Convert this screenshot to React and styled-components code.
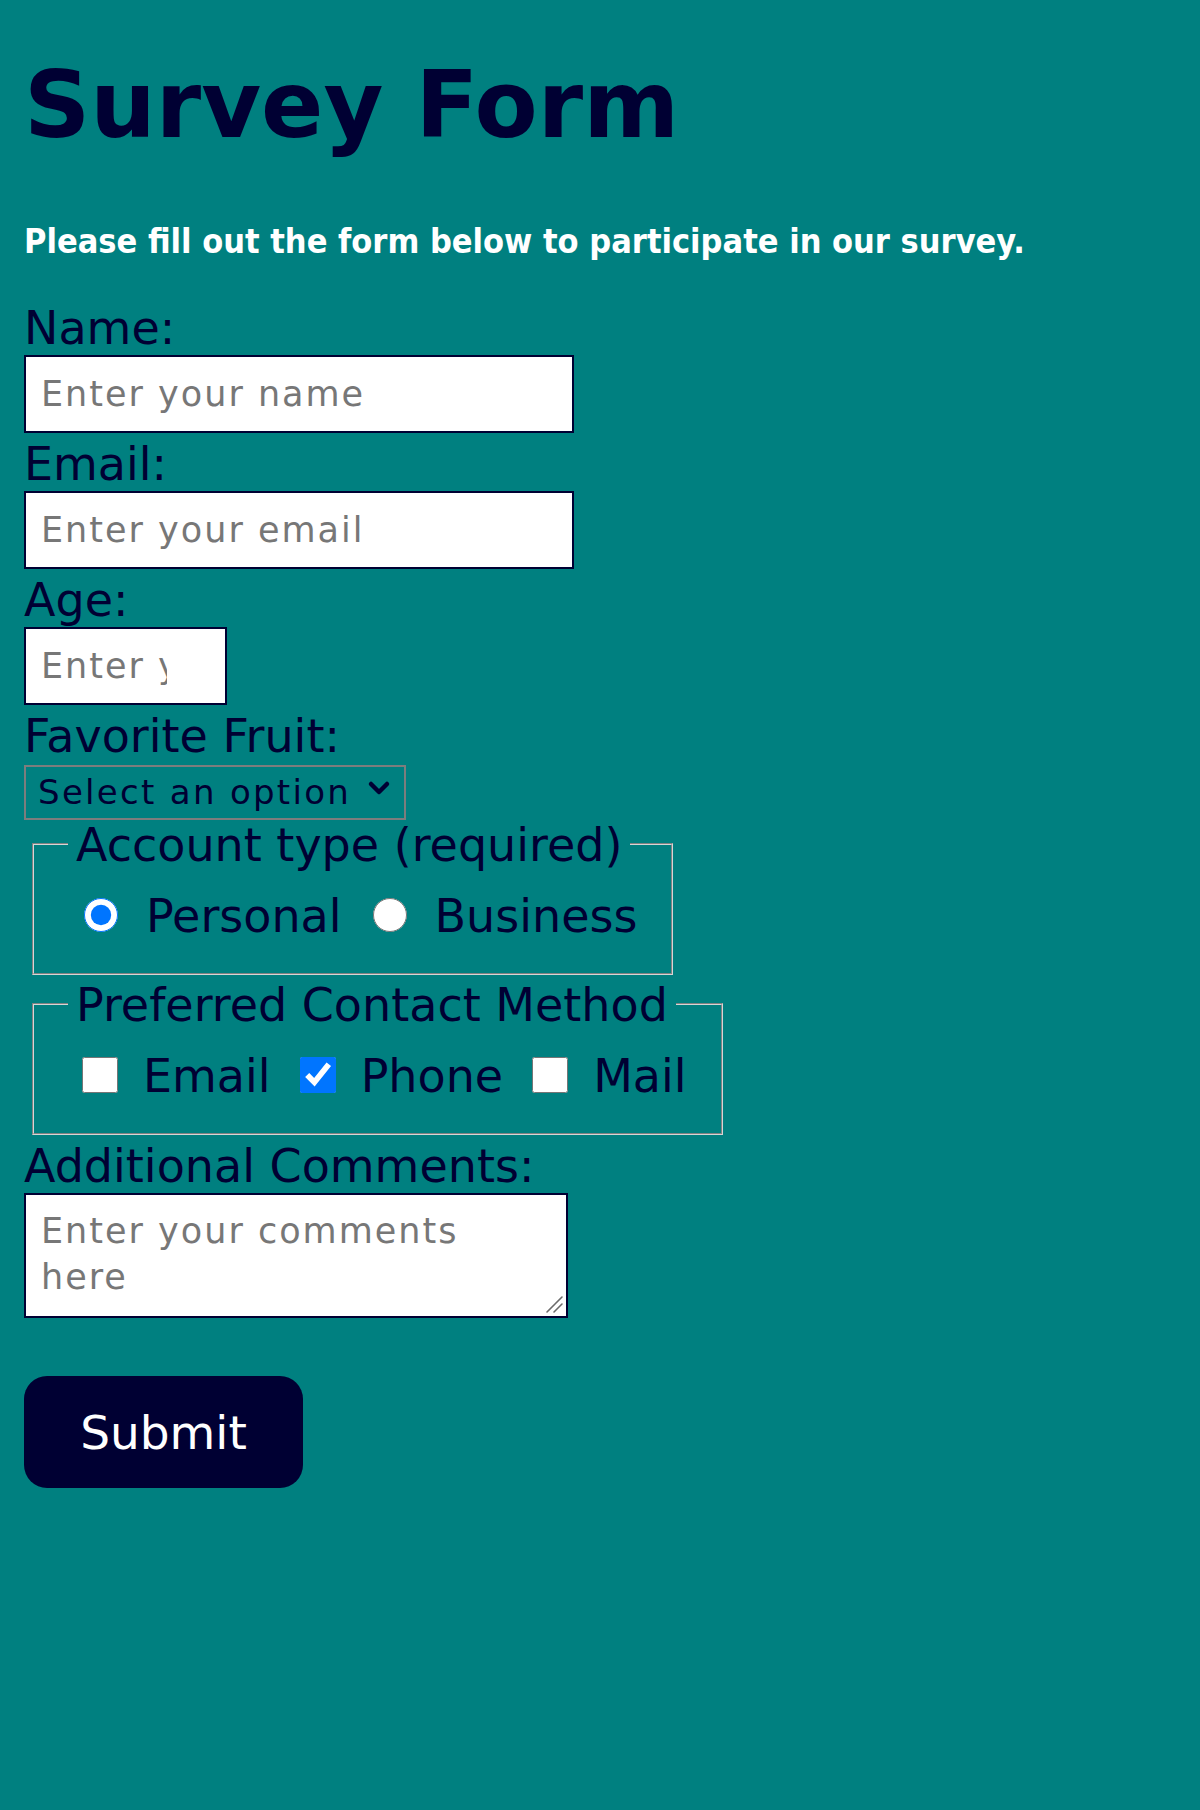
import React from 'react';
import styled, { createGlobalStyle } from 'styled-components';

const GlobalStyle = createGlobalStyle`
  html, body {
    margin: 0;
    padding: 0;
    background: #008080;
  }
  body {
    font-family: "DejaVu Sans", Verdana, sans-serif;
    color: #000033;
  }
`;

const Page = styled.main`
  min-height: 1810px;
  box-sizing: border-box;
  padding: 53px 24px 0;
`;

const Title = styled.h1`
  margin: 0;
  font-size: 92px;
  line-height: 106px;
  font-weight: bold;
  color: #000033;
`;

const Intro = styled.p`
  margin: 62px 0 0;
  font-family: "DejaVu Sans Condensed", "DejaVu Sans", Verdana, sans-serif;
  font-stretch: condensed;
  font-weight: bold;
  font-size: 34px;
  line-height: 40px;
  color: #ffffff;
`;

const Form = styled.form`
  display: flex;
  flex-direction: column;
  align-items: flex-start;
  margin-top: 36px;
  font-size: 46px;
`;

const FieldLabel = styled.label`
  display: block;
  padding-top: 5px;
  font-size: 46px;
  line-height: 53px;
  color: #000033;
`;

const TextInput = styled.input`
  display: block;
  box-sizing: border-box;
  width: ${(p) => p.$width}px;
  height: 78px;
  margin: 0;
  padding: 0 ${(p) => p.$padRight || 15}px 0 15px;
  border: 2px solid #000033;
  background: #ffffff;
  font-family: "DejaVu Sans", Verdana, sans-serif;
  font-size: 35px;
  letter-spacing: 2px;
  color: #000033;
  outline: none;
  &::placeholder {
    color: #777777;
  }
`;

const SelectWrap = styled.div`
  position: relative;
  width: 382px;
  height: 55px;
  margin-top: -2px;
`;

const Select = styled.select`
  appearance: none;
  box-sizing: border-box;
  width: 100%;
  height: 100%;
  margin: 0;
  padding: 0 12px;
  border: 2px solid #7d7d7d;
  background: transparent;
  font-family: "DejaVu Sans", Verdana, sans-serif;
  font-size: 34px;
  letter-spacing: 2.3px;
  color: #000033;
  outline: none;
`;

const Chevron = styled.svg`
  position: absolute;
  right: 15px;
  top: 18px;
  width: 24px;
  height: 20px;
  pointer-events: none;
`;

const Fieldset = styled.fieldset`
  width: fit-content;
  margin: ${(p) => (p.$first ? '0' : '1px')} 0 0 8px;
  padding: 16px 34px 31px;
  border: 2px groove #d6d6d6;
  font-size: 46px;
`;

const Legend = styled.legend`
  padding: 3px 8px 0;
  font-size: 46px;
  line-height: 52px;
  color: #000033;
`;

const OptionRow = styled.div`
  display: flex;
  align-items: center;
  padding-left: ${(p) => p.$indent}px;
`;

const Option = styled.label`
  display: flex;
  align-items: center;
  gap: ${(p) => p.$gap}px;
  margin-right: ${(p) => (p.$last ? 0 : p.$space)}px;
`;

const OptionText = styled.span`
  padding-top: 3px;
  font-size: 46px;
  line-height: 52px;
  color: #000033;
`;

const Control = styled.input`
  width: ${(p) => p.$size}px;
  height: ${(p) => p.$size}px;
  margin: 0;
  flex: none;
`;

const CommentsWrap = styled.div`
  position: relative;
  width: 544px;
  height: 125px;
`;

const Comments = styled.textarea`
  display: block;
  box-sizing: border-box;
  width: 100%;
  height: 100%;
  margin: 0;
  padding: 13px 15px;
  border: 2px solid #000033;
  background: #ffffff;
  font-family: "DejaVu Sans", Verdana, sans-serif;
  font-size: 35px;
  line-height: 46px;
  letter-spacing: 2px;
  color: #000033;
  outline: none;
  resize: none;
  &::placeholder {
    color: #777777;
  }
`;

const ResizeGrip = styled.svg`
  position: absolute;
  right: 4px;
  bottom: 4px;
  width: 22px;
  height: 22px;
  pointer-events: none;
`;

const SubmitButton = styled.button`
  box-sizing: border-box;
  width: 279px;
  height: 112px;
  margin-top: 58px;
  border: none;
  border-radius: 23px;
  background: #000033;
  color: #ffffff;
  font-family: "DejaVu Sans", Verdana, sans-serif;
  font-size: 47px;
  cursor: pointer;
`;

const radios = [
  { label: 'Personal', checked: true },
  { label: 'Business', checked: false },
];

const contacts = [
  { label: 'Email', checked: false },
  { label: 'Phone', checked: true },
  { label: 'Mail', checked: false },
];

export default function App() {
  return (
    <>
      <GlobalStyle />
      <Page>
        <Title>Survey Form</Title>
        <Intro>Please fill out the form below to participate in our survey.</Intro>
        <Form onSubmit={(e) => e.preventDefault()}>
          <FieldLabel htmlFor="name">Name:</FieldLabel>
          <TextInput id="name" type="text" placeholder="Enter your name" $width={550} />
          <FieldLabel htmlFor="email">Email:</FieldLabel>
          <TextInput id="email" type="email" placeholder="Enter your email" $width={550} />
          <FieldLabel htmlFor="age">Age:</FieldLabel>
          <TextInput id="age" type="text" inputMode="numeric" placeholder="Enter your age" $width={203} $padRight={58} />
          <FieldLabel htmlFor="fruit">Favorite Fruit:</FieldLabel>
          <SelectWrap>
            <Select id="fruit" defaultValue="">
              <option value="">Select an option</option>
              <option value="apple">Apple</option>
              <option value="banana">Banana</option>
              <option value="orange">Orange</option>
            </Select>
            <Chevron viewBox="0 0 24 20" aria-hidden="true">
              <path d="M4 5 L12 13 L20 5" fill="none" stroke="#000033" strokeWidth="4.5" strokeLinecap="round" strokeLinejoin="round" />
            </Chevron>
          </SelectWrap>
          <Fieldset $first>
            <Legend>Account type (required)</Legend>
            <OptionRow $indent={16}>
              {radios.map((r, i) => (
                <Option key={r.label} $gap={28} $space={31} $last={i === radios.length - 1}>
                  <Control type="radio" name="account" defaultChecked={r.checked} $size={34} />
                  <OptionText>{r.label}</OptionText>
                </Option>
              ))}
            </OptionRow>
          </Fieldset>
          <Fieldset>
            <Legend>Preferred Contact Method</Legend>
            <OptionRow $indent={14}>
              {contacts.map((c, i) => (
                <Option key={c.label} $gap={25} $space={29} $last={i === contacts.length - 1}>
                  <Control type="checkbox" name={`contact-${c.label.toLowerCase()}`} defaultChecked={c.checked} $size={36} />
                  <OptionText>{c.label}</OptionText>
                </Option>
              ))}
            </OptionRow>
          </Fieldset>
          <FieldLabel htmlFor="comments">Additional Comments:</FieldLabel>
          <CommentsWrap>
            <Comments id="comments" placeholder="Enter your comments here" />
            <ResizeGrip viewBox="0 0 22 22" aria-hidden="true">
              <path d="M20 5 L5 20 M20 12 L12 20" stroke="#6b6b6b" strokeWidth="1.6" strokeLinecap="round" />
            </ResizeGrip>
          </CommentsWrap>
          <SubmitButton type="submit">Submit</SubmitButton>
        </Form>
      </Page>
    </>
  );
}
